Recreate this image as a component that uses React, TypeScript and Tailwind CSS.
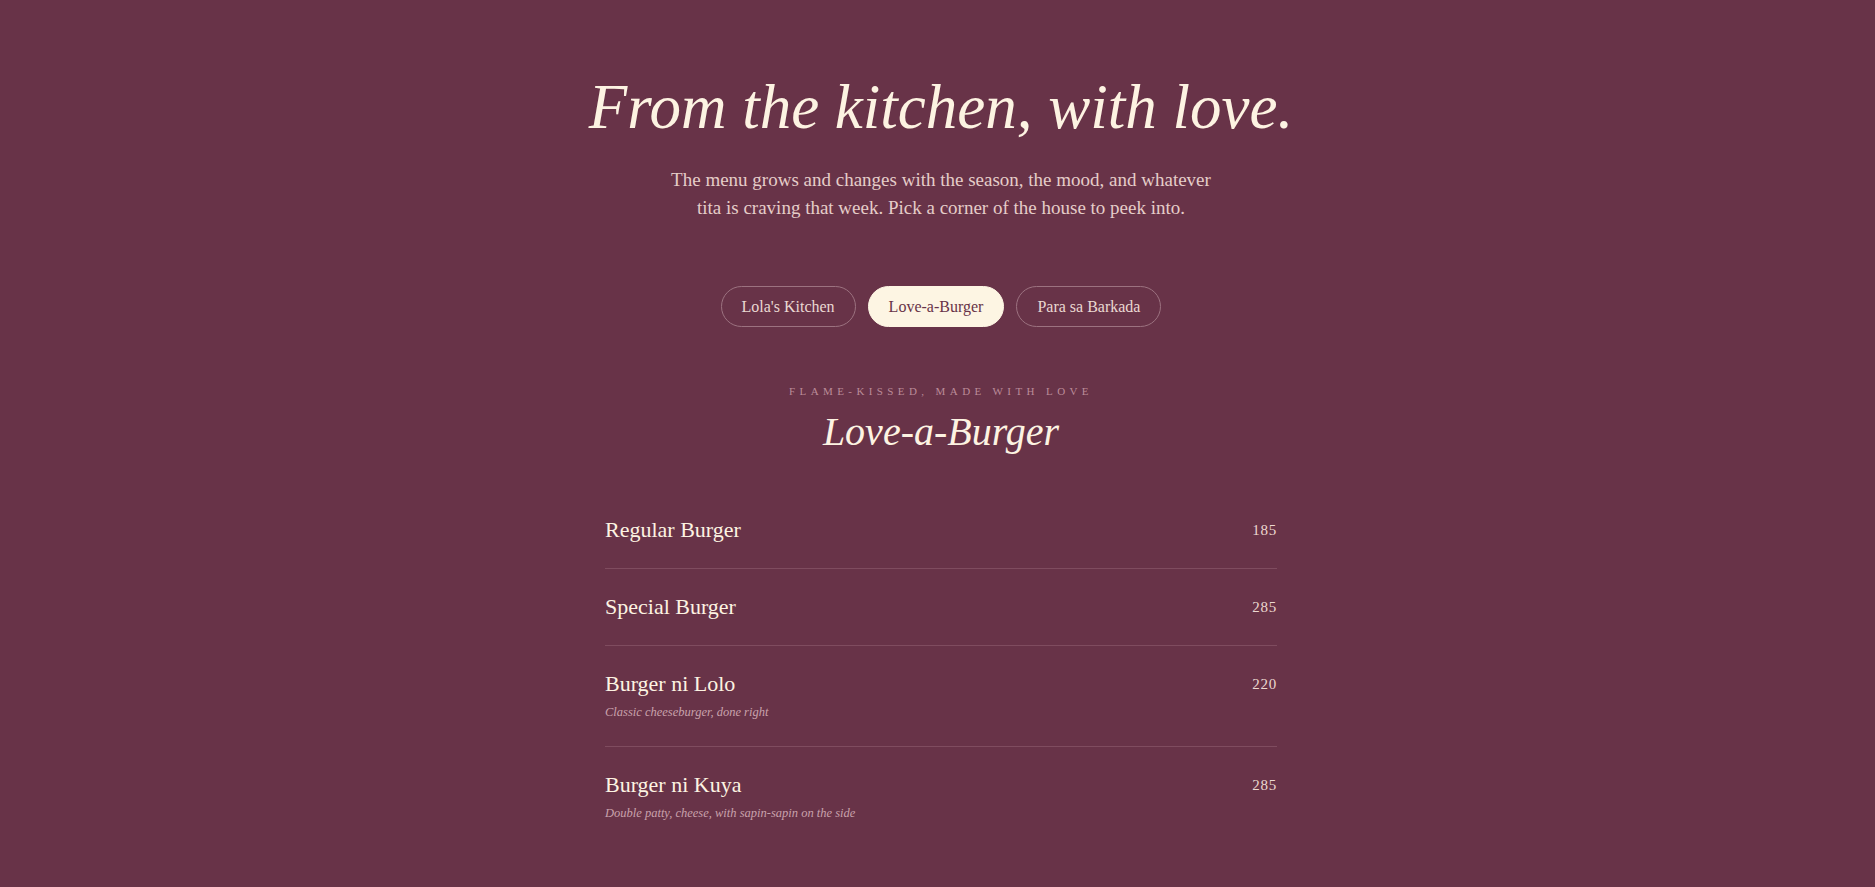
import { useState } from "react";

type MenuItem = {
  name: string;
  price: number;
  description?: string;
};

type Corner = {
  id: string;
  label: string;
  tagline: string;
  items: MenuItem[];
};

const corners: Corner[] = [
  {
    id: "lola",
    label: "Lola's Kitchen",
    tagline: "Recipes from the old house",
    items: [
      { name: "Adobong Manok", price: 265 },
      { name: "Sinigang na Baboy", price: 295 },
    ],
  },
  {
    id: "burger",
    label: "Love-a-Burger",
    tagline: "Flame-kissed, made with love",
    items: [
      { name: "Regular Burger", price: 185 },
      { name: "Special Burger", price: 285 },
      {
        name: "Burger ni Lolo",
        price: 220,
        description: "Classic cheeseburger, done right",
      },
      {
        name: "Burger ni Kuya",
        price: 285,
        description: "Double patty, cheese, with sapin-sapin on the side",
      },
    ],
  },
  {
    id: "barkada",
    label: "Para sa Barkada",
    tagline: "Big plates to share",
    items: [
      { name: "Kare-Kare Platter", price: 895 },
      { name: "Lechon Kawali", price: 650 },
    ],
  },
];

const MenuRow = ({ item, last }: { item: MenuItem; last: boolean }) => {
  return (
    <li
      className={
        "flex items-start justify-between py-6 " +
        (last ? "" : "border-b border-[#7f4c5f]")
      }
    >
      <div>
        <div className="font-['Liberation_Serif',serif] text-[22px] leading-[28px] text-[#fdf3e2]">
          {item.name}
        </div>
        {item.description && (
          <div className="mt-1 font-['Liberation_Serif',serif] text-[12.5px] leading-[20px] italic text-[#c9a2ac]">
            {item.description}
          </div>
        )}
      </div>
      <div className="font-['Liberation_Serif',serif] text-[15px] leading-[28px] tracking-[0.05em] text-[#ecd8d0]">
        {item.price}
      </div>
    </li>
  );
};

const App = () => {
  const [activeId, setActiveId] = useState<string>("burger");
  const active = corners.find((c) => c.id === activeId) ?? corners[1];

  return (
    <div className="min-h-screen bg-[#683348] pt-[72px] pb-16 pl-[7px]">
      <div className="flex flex-col items-center">
        <h1 className="font-['Liberation_Serif',serif] text-[63px] leading-[70px] italic text-[#fdf3e2]">
          From the kitchen, with love.
        </h1>
        <p className="mt-6 max-w-[560px] text-center font-['Liberation_Serif',serif] text-[19px] leading-[28px] text-[#e5cdc8]">
          The menu grows and changes with the season, the mood, and whatever
          tita is craving that week. Pick a corner of the house to peek into.
        </p>

        <div className="mt-16 flex gap-3">
          {corners.map((corner) => {
            const isActive = corner.id === activeId;
            return (
              <button
                key={corner.id}
                onClick={() => setActiveId(corner.id)}
                className={
                  isActive
                    ? "flex h-[41px] items-center rounded-full border border-[#fdf5e3] bg-[#fdf5e3] px-5 font-['Liberation_Serif',serif] text-[16px] text-[#683348]"
                    : "flex h-[41px] items-center rounded-full border border-[#9c7280] px-5 font-['Liberation_Serif',serif] text-[16px] text-[#ead8d2]"
                }
              >
                {corner.label}
              </button>
            );
          })}
        </div>

        <div className="mt-14 font-['Liberation_Serif',serif] text-[11px] leading-[16px] uppercase tracking-[0.4em] text-[#bb8c99]">
          {active.tagline}
        </div>
        <h2 className="mt-[9px] font-['Liberation_Serif',serif] text-[40px] leading-[48px] italic text-[#fdf3e2]">
          {active.label}
        </h2>

        <ul className="mt-9 w-full max-w-[672px]">
          {active.items.map((item, i) => (
            <MenuRow
              key={item.name}
              item={item}
              last={i === active.items.length - 1}
            />
          ))}
        </ul>
      </div>
    </div>
  );
};

export default App;
